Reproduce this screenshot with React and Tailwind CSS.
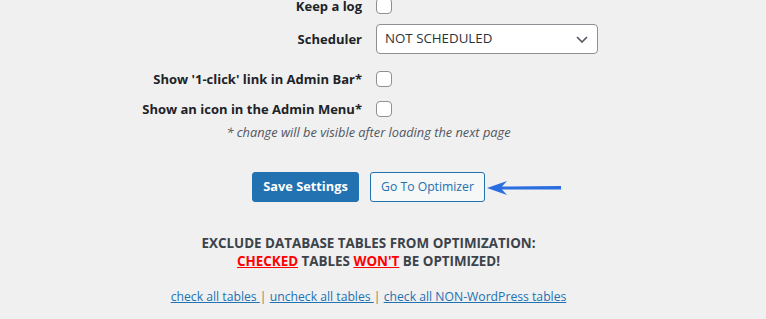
import React from "react";

function Checkbox() {
  return <span className="block w-[16px] h-[16px] rounded-[4px] border border-[#8c8f94] bg-white" />;
}

function Row({ label, children, className }) {
  return (
    <div className={"grid grid-cols-[362px_1fr] items-center " + className}>
      <div className="text-right font-bold text-[13px] leading-[20px] text-[#1d2327] whitespace-nowrap">{label}</div>
      <div className="pl-[14px] flex items-center">{children}</div>
    </div>
  );
}

export default function App() {
  return (
    <div className="w-[766px] h-[319px] overflow-hidden bg-[#f0f0f1]" style={{ fontFamily: '"Open Sans", "Noto Sans", sans-serif' }}>
      <div className="w-[737px] flex flex-col">
        <Row label="Keep a log" className="-mt-[4px] h-[16px]">
          <Checkbox />
        </Row>
        <Row label="Scheduler" className="mt-[12px] h-[30px]">
          <div className="w-[222px] h-[30px] rounded-[4px] border border-[#8c8f94] bg-white flex items-center justify-between pl-[8px] pr-[9px]">
            <span className="text-[13.3px] text-[#2c3338]">NOT SCHEDULED</span>
            <svg width="12" height="7" viewBox="0 0 12 7" fill="none">
              <path d="M1 1l5 5 5-5" stroke="#50575e" strokeWidth="1.6" />
            </svg>
          </div>
        </Row>
        <Row label="Show '1-click' link in Admin Bar*" className="mt-[15px] h-[16px]">
          <Checkbox />
        </Row>
        <Row label="Show an icon in the Admin Menu*" className="mt-[14px] h-[16px]">
          <Checkbox />
        </Row>
        <div className="mt-[7px] text-center italic text-[12.8px] leading-[20px] text-[#50575e]">
          * change will be visible after loading the next page
        </div>
        <div className="mt-[30px] flex justify-center gap-[11px]">
          <button className="h-[30px] w-[107px] rounded-[3px] bg-[#2271b1] border border-[#2271b1] text-white font-bold text-[12.8px]">
            Save Settings
          </button>
          <div className="relative">
            <button className="h-[30px] w-[115px] rounded-[3px] bg-[#f6f7f7] border border-[#2271b1] text-[#2271b1] text-[12.2px]">
              Go To Optimizer
            </button>
            <svg className="absolute left-[calc(100%+2px)] top-[9px]" width="76" height="14" viewBox="0 0 76 14">
              <polygon points="0,7 20,0 15,5.5 74,5 74,8.5 15,8.5 20,14" fill="#2a6ee0" />
            </svg>
          </div>
        </div>
        <div className="mt-[32px] text-center font-bold text-[13.4px] leading-[18px] text-[#3c434a] uppercase">
          <div>EXCLUDE DATABASE TABLES FROM OPTIMIZATION:</div>
          <div>
            <span className="text-[#ff0000] underline">CHECKED</span> TABLES{" "}
            <span className="text-[#ff0000] underline">WON'T</span> BE OPTIMIZED!
          </div>
        </div>
        <div className="mt-[17px] text-center text-[12.2px] leading-[20px] text-[#8c7a5e]">
          <a className="text-[#2271b1] underline">check all tables </a>|{" "}
          <a className="text-[#2271b1] underline">uncheck all tables </a>|{" "}
          <a className="text-[#2271b1] underline">check all NON-WordPress tables</a>
        </div>
      </div>
    </div>
  );
}
